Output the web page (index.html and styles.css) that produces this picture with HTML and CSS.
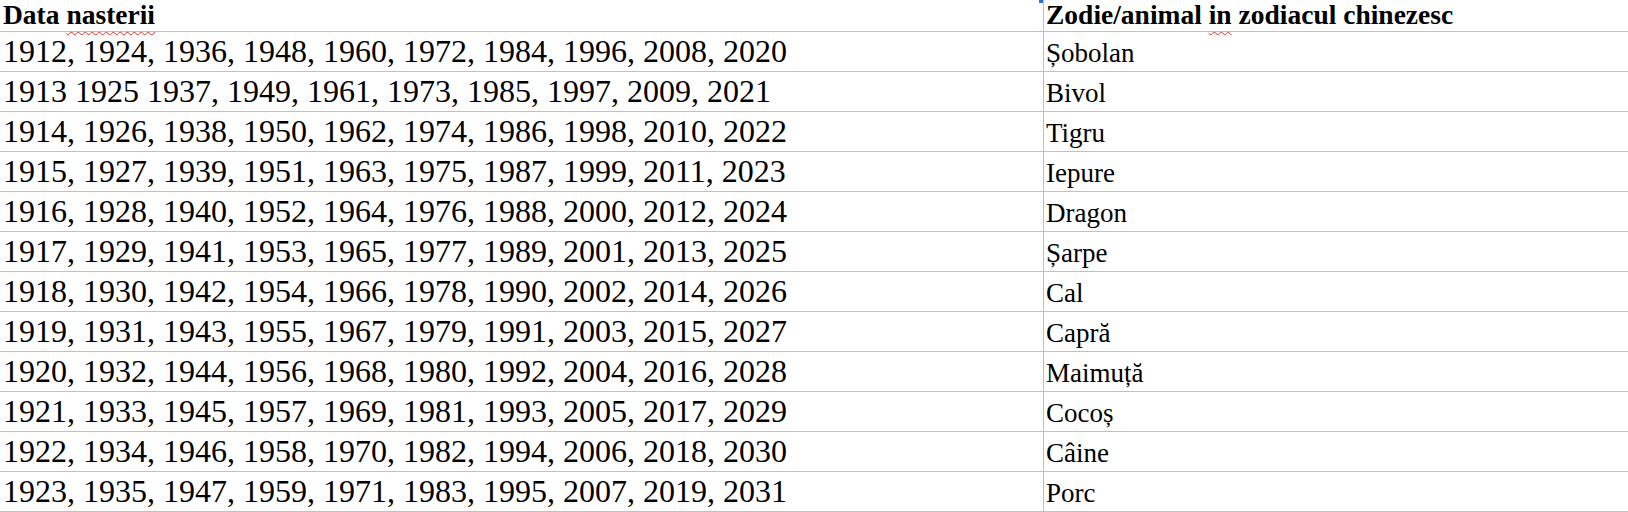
FILE: index.html
```html
<!DOCTYPE html>
<html lang="ro">
<head>
<meta charset="utf-8">
<title>Zodiac chinezesc</title>
<link rel="stylesheet" href="styles.css">
</head>
<body>
<div class="sheet">
  <div class="cursor-mark"></div>
  <div class="cell head c1">Data <span class="spell">nasterii</span></div>
  <div class="cell head c2">Zodie/animal <span class="spell">in</span> zodiacul chinezesc</div>

  <div class="cell years c1">1912, 1924, 1936, 1948, 1960, 1972, 1984, 1996, 2008, 2020</div>
  <div class="cell sign c2">Șobolan</div>

  <div class="cell years c1">1913 1925 1937, 1949, 1961, 1973, 1985, 1997, 2009, 2021</div>
  <div class="cell sign c2">Bivol</div>

  <div class="cell years c1">1914, 1926, 1938, 1950, 1962, 1974, 1986, 1998, 2010, 2022</div>
  <div class="cell sign c2">Tigru</div>

  <div class="cell years c1">1915, 1927, 1939, 1951, 1963, 1975, 1987, 1999, 2011, 2023</div>
  <div class="cell sign c2">Iepure</div>

  <div class="cell years c1">1916, 1928, 1940, 1952, 1964, 1976, 1988, 2000, 2012, 2024</div>
  <div class="cell sign c2">Dragon</div>

  <div class="cell years c1">1917, 1929, 1941, 1953, 1965, 1977, 1989, 2001, 2013, 2025</div>
  <div class="cell sign c2">Șarpe</div>

  <div class="cell years c1">1918, 1930, 1942, 1954, 1966, 1978, 1990, 2002, 2014, 2026</div>
  <div class="cell sign c2">Cal</div>

  <div class="cell years c1">1919, 1931, 1943, 1955, 1967, 1979, 1991, 2003, 2015, 2027</div>
  <div class="cell sign c2">Capră</div>

  <div class="cell years c1">1920, 1932, 1944, 1956, 1968, 1980, 1992, 2004, 2016, 2028</div>
  <div class="cell sign c2">Maimuță</div>

  <div class="cell years c1">1921, 1933, 1945, 1957, 1969, 1981, 1993, 2005, 2017, 2029</div>
  <div class="cell sign c2">Cocoș</div>

  <div class="cell years c1">1922, 1934, 1946, 1958, 1970, 1982, 1994, 2006, 2018, 2030</div>
  <div class="cell sign c2">Câine</div>

  <div class="cell years c1">1923, 1935, 1947, 1959, 1971, 1983, 1995, 2007, 2019, 2031</div>
  <div class="cell sign c2">Porc</div>
</div>
</body>
</html>
```

FILE: styles.css
```css
html, body {
  margin: 0;
  padding: 0;
  background: #ffffff;
}

body {
  font-family: "Liberation Serif", "Times New Roman", serif;
  color: #000000;
  overflow: hidden;
}

.sheet {
  position: relative;
  display: grid;
  grid-template-columns: 1044px 1fr;
  grid-template-rows: 32px repeat(12, 40px);
  width: 1628px;
}

.cell {
  box-sizing: border-box;
  display: flex;
  align-items: flex-end;
  border-bottom: 1px solid #c0c0c0;
  padding-left: 3px;
  padding-bottom: 4px;
  line-height: 1;
  white-space: nowrap;
}

.c1 {
  border-right: 1px solid #c0c0c0;
}

.c2 {
  padding-left: 2px;
}

.head {
  font-weight: bold;
  font-size: 27.5px;
  padding-bottom: 3px;
}

.head .spell {
  margin-left: 0.25em;
}

.head.c2 .spell {
  margin-right: 0.25em;
}

.years {
  font-size: 32px;
}

.sign {
  font-size: 27px;
}

.spell {
  text-decoration-line: underline;
  text-decoration-style: wavy;
  text-decoration-color: #e0302a;
  text-decoration-thickness: 1px;
  text-underline-offset: 7px;
}

.cursor-mark {
  position: absolute;
  left: 1039px;
  top: 0;
  width: 4px;
  height: 3px;
  background: #2a6fdb;
}
```
